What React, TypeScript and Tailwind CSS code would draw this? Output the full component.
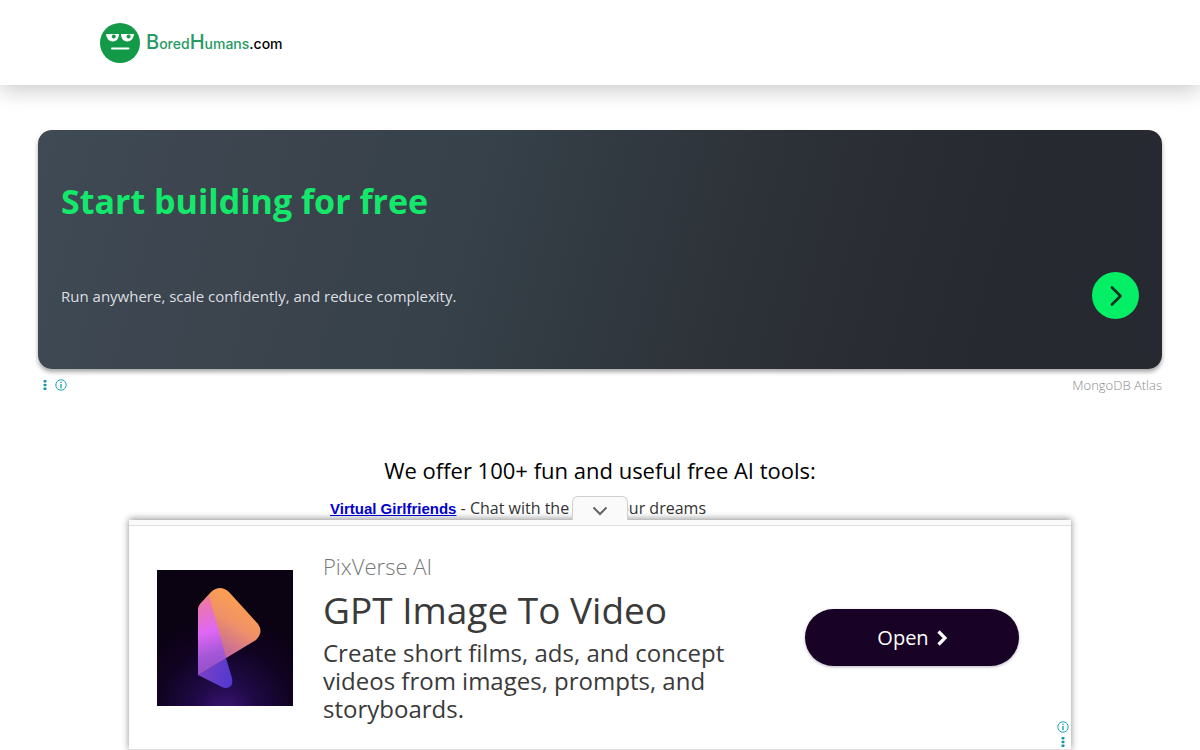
import { useState } from "react";

const tools = [
  { name: "Virtual Girlfriends", href: "#girlfriends", text: "Chat with the AI of your dreams" },
];

function Logo() {
  return (
    <a href="#home" className="inline-flex items-center gap-[6px]">
      <svg viewBox="0 0 40 40" className="size-10" aria-hidden="true">
        <circle cx="20" cy="20" r="20" fill="#129a48" />
        <path d="M6 11H19C19 15.5 16.5 18.5 12.7 18.5S6.5 15.5 6 11Z" fill="#fff" />
        <path d="M21 11H34C33.500 15.500 31 18.500 27.300 18.500S21 15.500 21 11Z" fill="#fff" />
        <circle cx="13.800" cy="13.600" r="2" fill="#129a48" />
        <circle cx="28.600" cy="13.600" r="2" fill="#129a48" />
        <path d="M12 25.500H28.500" stroke="#fff" strokeWidth="2" strokeLinecap="round" />
      </svg>
      <span className="font-['Inter',sans-serif] text-sm leading-5 font-medium text-[#259a63]">
        <span className="text-xl leading-5">B</span>ored
        <span className="text-xl leading-5">H</span>umans<span className="text-black">.com</span>
      </span>
    </a>
  );
}

function InfoIcon() {
  return (
    <svg viewBox="0 0 12 12" className="size-3" aria-hidden="true">
      <circle cx="6" cy="6" r="5.200" fill="none" stroke="#1fa3b5" />
      <path d="M6 5V9.200M6 2.700V4" stroke="#1fa3b5" strokeWidth="1.400" />
    </svg>
  );
}

function DotsIcon() {
  return (
    <svg viewBox="0 0 4 12" className="h-3 w-1" fill="#1495ab" aria-hidden="true">
      <rect x="0.500" y="1" width="3" height="2.600" rx="0.800" />
      <rect x="0.500" y="4.700" width="3" height="2.600" rx="0.800" />
      <rect x="0.500" y="8.400" width="3" height="2.600" rx="0.800" />
    </svg>
  );
}

function PixVerseIcon() {
  return (
    <svg viewBox="0 0 136 136" className="size-[136px] shrink-0" aria-hidden="true">
      <defs>
        <radialGradient id="bg" cx="0.5" cy="1.05" r="0.75">
          <stop offset="0" stopColor="#3d1478" />
          <stop offset="0.3" stopColor="#200a48" />
          <stop offset="0.65" stopColor="#100322" />
          <stop offset="1" stopColor="#0b0212" />
        </radialGradient>
        <linearGradient id="orange" gradientUnits="userSpaceOnUse" x1="88" y1="38" x2="52" y2="94">
          <stop offset="0" stopColor="#fb9d55" />
          <stop offset="0.3" stopColor="#ee9068" />
          <stop offset="0.7" stopColor="#c96b98" />
          <stop offset="1" stopColor="#a85bc0" />
        </linearGradient>
        <linearGradient id="pink" x1="0.3" y1="0" x2="0.4" y2="1">
          <stop offset="0" stopColor="#f0799a" />
          <stop offset="0.45" stopColor="#df68f5" />
          <stop offset="0.75" stopColor="#a457d8" />
          <stop offset="1" stopColor="#9150c4" />
        </linearGradient>
        <linearGradient id="violet" x1="0" y1="0.4" x2="1" y2="0.6">
          <stop offset="0" stopColor="#7b42c4" />
          <stop offset="1" stopColor="#5238cf" />
        </linearGradient>
      </defs>
      <rect width="136" height="136" fill="url(#bg)" />
      <path
        d="M41 105V41Q41 36 44 33L54 22Q63 14 72 22L101 54Q107 62 99 70L41 105Z"
        fill="url(#orange)"
      />
      <path d="M41 105L69 88L75 108Q77 118 68 118Q66 118 63 116Z" fill="url(#violet)" />
      <path d="M41 105V41Q41 36 44 33L52 26L69 88Z" fill="url(#pink)" />
    </svg>
  );
}

function Banner() {
  return (
    <section className="px-[38px] pt-[45px] font-['Open_Sans',sans-serif]">
      <div className="rounded-[14px] bg-linear-[105deg,#3f4a54_0%,#3c444e_20%,#364149_38%,#2d3238_62%,#26292f_85%,#26292f_100%] px-[23px] pt-[46px] pb-[50px] shadow-[0_3px_4px_rgba(0,0,0,0.35)]">
        <h2 className="text-[34px] leading-[50px] font-bold text-[#13e86b]">
          Start building for free
        </h2>
        <div className="mt-[46px] flex items-center justify-between">
          <p className="text-[15px] leading-6 text-[#dcdfe2]">
            Run anywhere, scale confidently, and reduce complexity.
          </p>
          <button
            aria-label="Learn more"
            className="flex size-[47px] items-center justify-center rounded-full bg-[#04ee66]"
          >
            <svg viewBox="0 0 24 24" className="size-6" fill="none" aria-hidden="true">
              <path
                d="M8 3.500L16.500 12L8 20.500"
                stroke="#12301f"
                strokeWidth="2.600"
                strokeLinecap="round"
                strokeLinejoin="round"
              />
            </svg>
          </button>
        </div>
      </div>
      <div className="mt-[6px] flex items-center justify-between pl-[5px]">
        <div className="flex items-center gap-2">
          <DotsIcon />
          <InfoIcon />
        </div>
        <span className="text-[13px] leading-5 font-light text-[#8b8b8b]">MongoDB Atlas</span>
      </div>
    </section>
  );
}

function AnchorAd() {
  const [open, setOpen] = useState(true);

  return (
    <aside className="fixed inset-x-0 bottom-0 mx-auto w-[calc(100%-258px)] font-['Open_Sans',sans-serif] shadow-[0_-1px_7px_rgba(0,0,0,0.45)]">
      <button
        aria-label={open ? "Hide ad" : "Show ad"}
        onClick={() => setOpen(!open)}
        className="absolute bottom-full left-1/2 flex h-6 w-14 -translate-x-1/2 items-center justify-center rounded-t-md border border-b-0 border-[#cfcfcf] bg-[#fafafa] pt-1"
      >
        <svg viewBox="0 0 16 10" className="h-[10px] w-4" fill="none" aria-hidden="true">
          <path d="M1.500 1.500L8 8L14.500 1.500" stroke="#666" strokeWidth="2" />
        </svg>
      </button>
      <div className="h-[6px] border-b border-[#e0e0e0] bg-[#fafafa]" />
      {open && (
        <div className="relative flex items-center border-b border-[#e0e0e0] bg-white py-[26px] pr-[52px] pl-7">
          <PixVerseIcon />
          <div className="ml-[30px] min-w-0 flex-1">
            <p className="text-[22px] leading-7 font-light text-[#777]">PixVerse AI</p>
            <h3 className="text-[37px] leading-[59px] text-[#3a3a3a]">GPT Image To Video</h3>
            <p className="max-w-[430px] text-2xl leading-7 text-[#3a3a3a]">
              Create short films, ads, and concept videos from images, prompts, and storyboards.
            </p>
          </div>
          <button className="flex h-[57px] w-[214px] shrink-0 items-center justify-center gap-2 rounded-full bg-[#180327] text-xl text-white shadow-[0_1px_3px_rgba(24,3,39,0.3)]">
            Open
            <svg viewBox="0 0 10 16" className="h-4 w-[10px]" fill="none" aria-hidden="true">
              <path d="M1.500 1.500L8 8L1.500 14.500" stroke="#fff" strokeWidth="3.200" />
            </svg>
          </button>
          <div className="absolute right-[2px] bottom-[1px] flex flex-col items-center gap-[3px]">
            <InfoIcon />
            <DotsIcon />
          </div>
        </div>
      )}
    </aside>
  );
}

export default function App() {
  return (
    <div className="min-h-screen bg-white">
      <header className="flex h-[85px] items-center px-[100px] shadow-[0_6px_20px_rgba(0,0,0,0.2)]">
        <Logo />
      </header>
      <Banner />
      <main className="px-4 pt-[59px] pb-60 font-['Open_Sans',sans-serif]">
        <h1 className="text-center text-[22px] leading-8 font-medium text-black">
          We offer 100+ fun and useful free AI tools:
        </h1>
        <ul className="mx-auto mt-[10px] max-w-[540px] text-base leading-6 text-[#333]">
          {tools.map((tool) => (
            <li key={tool.name}>
              <a
                href={tool.href}
                className="font-['Liberation_Sans',sans-serif] text-[15px] font-bold text-[#0000d0] underline"
              >
                {tool.name}
              </a>{" "}
              - {tool.text}
            </li>
          ))}
        </ul>
      </main>
      <AnchorAd />
    </div>
  );
}
